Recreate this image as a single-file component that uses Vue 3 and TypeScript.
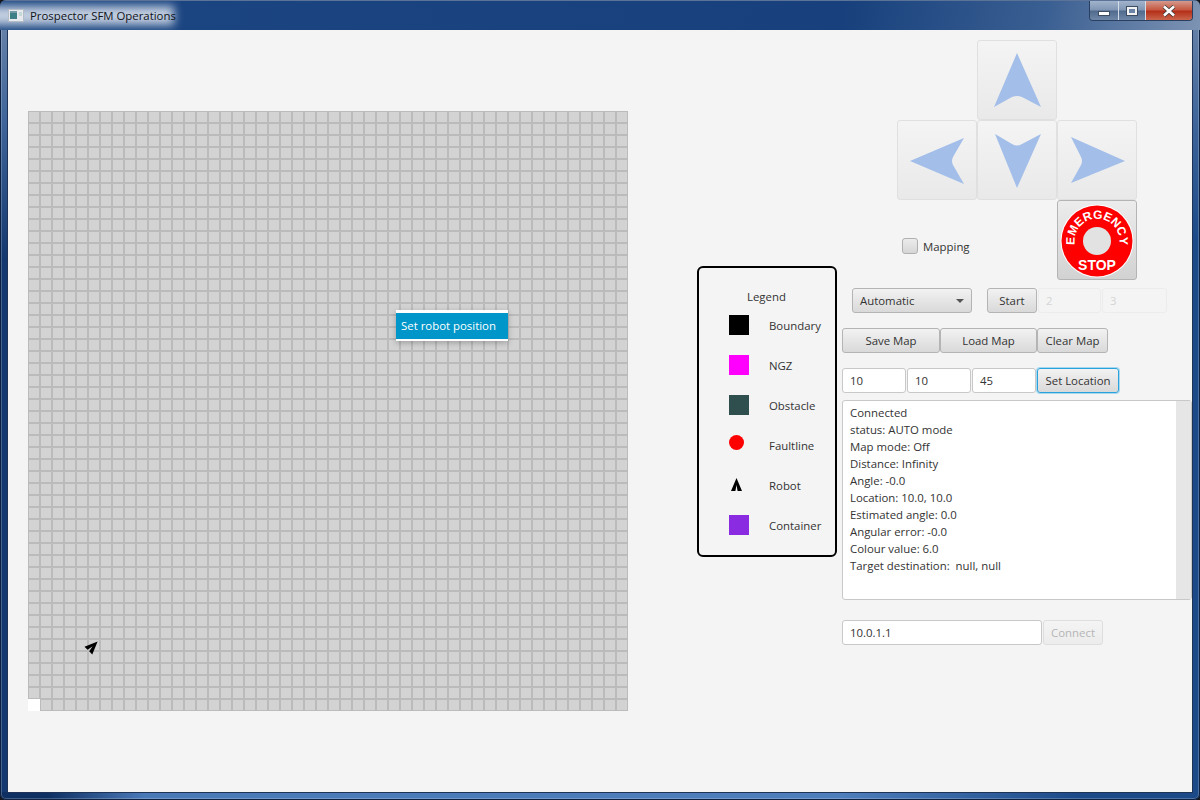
<template>
  <div class="window">
    <div class="titlebar">
      <div class="title-glow">
        <svg class="app-icon" width="16" height="13" viewBox="0 0 16 13">
          <rect x="0.5" y="0.5" width="15" height="12" fill="#e6eaee" stroke="#b4bcc6" />
          <rect x="2" y="3" width="7" height="7" fill="#3c7f86" />
          <rect x="2" y="2" width="7" height="2" fill="#6f9aa6" />
          <rect x="11" y="3" width="3" height="4" fill="#c4d8d8" />
        </svg>
        <span class="title-text">Prospector SFM Operations</span>
      </div>
      <div class="win-controls">
        <div class="win-btn min"><span class="min-glyph"></span></div>
        <div class="win-btn max"><span class="max-glyph"></span></div>
        <div class="win-btn close">
          <svg width="16" height="12" viewBox="0 0 16 12">
            <path d="M3 1.5 L13 10.5 M13 1.5 L3 10.5" stroke="#3a3a3a" stroke-width="4.2" />
            <path d="M3 1.5 L13 10.5 M13 1.5 L3 10.5" stroke="#fff" stroke-width="2.6" />
          </svg>
        </div>
      </div>
    </div>

    <div class="client">
      <div class="map">
        <div class="home-cell"></div>
        <svg class="map-robot" width="18" height="18" viewBox="0 0 18 18">
          <g transform="rotate(45 9 9) translate(3.5 2.5)">
            <path d="M5.5 0 L11 13 L6.6 13 L5.5 7 L4.4 13 L0 13 Z" fill="#000" />
          </g>
        </svg>
        <div class="context-menu">
          <div class="menu-item">Set robot position</div>
        </div>
      </div>

      <div class="legend">
        <div class="legend-title">Legend</div>
        <div v-for="item in legendItems" :key="item.label" class="legend-row">
          <div class="legend-mark">
            <span v-if="item.kind === 'square'" class="swatch" :style="{ background: item.color }"></span>
            <span v-else-if="item.kind === 'circle'" class="dot"></span>
            <svg v-else class="legend-robot" width="11" height="13" viewBox="0 0 11 13">
              <path d="M5.5 0 L11 13 L6.6 13 L5.5 7 L4.4 13 L0 13 Z" fill="#000" />
            </svg>
          </div>
          <span class="legend-label">{{ item.label }}</span>
        </div>
      </div>

      <div class="controls">
        <div class="dpad">
          <button class="pad-btn pad-up">
            <svg width="80" height="80" viewBox="0 0 80 80">
              <path class="arrow" d="M40 13 L64 67 L45 57 Q40 55 35 57 L17 67 Z" />
            </svg>
          </button>
          <button class="pad-btn pad-left">
            <svg width="80" height="80" viewBox="0 0 80 80">
              <path class="arrow" d="M13 41 L67 18 L56 37 Q54 41 56 45 L67 64 Z" />
            </svg>
          </button>
          <button class="pad-btn pad-down">
            <svg width="80" height="80" viewBox="0 0 80 80">
              <path class="arrow" d="M40 68 L18 14 L35 24 Q40 27 45 24 L64 14 Z" />
            </svg>
          </button>
          <button class="pad-btn pad-right">
            <svg width="80" height="80" viewBox="0 0 80 80">
              <path class="arrow" d="M68 41 L14 17 L24 37 Q26 41 24 45 L14 63 Z" />
            </svg>
          </button>
          <label class="mapping">
            <span class="checkbox"></span>
            <span>Mapping</span>
          </label>
          <button class="pad-btn pad-stop">
            <svg width="80" height="80" viewBox="0 0 80 80">
              <defs>
                <path id="stop-arc" d="M18 46 A22.5 22.5 0 1 1 62 46" />
              </defs>
              <circle cx="40" cy="41" r="36.5" fill="#fff" />
              <circle cx="40" cy="41" r="35.5" fill="#fe0000" />
              <circle cx="40" cy="41" r="14" fill="#e2e2e2" />
              <text class="stop-arc-text">
                <textPath href="#stop-arc" startOffset="50%" text-anchor="middle">EMERGENCY</textPath>
              </text>
              <text class="stop-text" x="40" y="69.5" text-anchor="middle">STOP</text>
            </svg>
          </button>
        </div>

        <div class="mode-row">
          <button class="fx-btn mode-select">
            <span>Automatic</span>
            <span class="caret"></span>
          </button>
          <button class="fx-btn start-btn">Start</button>
          <input class="fx-input off-input" disabled placeholder="2" />
          <input class="fx-input off-input" disabled placeholder="3" />
        </div>

        <div class="map-row">
          <button class="fx-btn save-btn">Save Map</button>
          <button class="fx-btn load-btn">Load Map</button>
          <button class="fx-btn clear-btn">Clear Map</button>
        </div>

        <div class="location-row">
          <input class="fx-input loc-input" value="10" />
          <input class="fx-input loc-input" value="10" />
          <input class="fx-input loc-input" value="45" />
          <button class="fx-btn set-btn">Set Location</button>
        </div>

        <div class="status-box">
          <div class="status-text">
            <div v-for="line in statusLines" :key="line">{{ line }}</div>
          </div>
          <div class="status-scroll"></div>
        </div>

        <div class="connect-row">
          <input class="fx-input ip-input" value="10.0.1.1" />
          <button class="fx-btn connect-btn" disabled>Connect</button>
        </div>
      </div>
    </div>
  </div>
</template>

<script setup lang="ts">
interface LegendItem {
  label: string
  kind: 'square' | 'circle' | 'robot'
  color?: string
}

const legendItems: LegendItem[] = [
  { label: 'Boundary', kind: 'square', color: '#000000' },
  { label: 'NGZ', kind: 'square', color: '#ff00ff' },
  { label: 'Obstacle', kind: 'square', color: '#2f4f4f' },
  { label: 'Faultline', kind: 'circle' },
  { label: 'Robot', kind: 'robot' },
  { label: 'Container', kind: 'square', color: '#8a2be2' }
]

const statusLines: string[] = [
  'Connected',
  'status: AUTO mode',
  'Map mode: Off',
  'Distance: Infinity',
  'Angle: -0.0',
  'Location: 10.0, 10.0',
  'Estimated angle: 0.0',
  'Angular error: -0.0',
  'Colour value: 6.0',
  'Target destination:  null, null'
]
</script>

<style>
html,
body {
  margin: 0;
  background: #15181d;
}
</style>

<style scoped>
.window {
  width: 1200px;
  height: 800px;
  box-sizing: border-box;
  display: flex;
  flex-direction: column;
  padding: 0 8px 8px;
  overflow: hidden;
  border-radius: 6px;
  font-family: "Open Sans", "Noto Sans", sans-serif;
  font-size: 11.4px;
  color: #333;
  background:
    linear-gradient(180deg, #6f88ab 0, #3f659a 120px, #12386f 260px, #12386f 100%) 0 0 / 7px 792px no-repeat,
    linear-gradient(180deg, #6f88ab 0, #3f659a 120px, #1c4a88 240px, #1c4a88 100%) 100% 0 / 7px 792px no-repeat,
    linear-gradient(90deg, #0e2f62 0%, #0e2f62 4%, #4a79b8 12%, #4f7ebd 70%, #1c4a88 90%, #1c4a88 100%);
  box-shadow: inset 0 0 0 1px #0d2243, inset 0 0 0 2px rgba(255, 255, 255, 0.22);
}
.titlebar {
  position: relative;
  height: 30px;
  margin: 0 -8px;
  display: flex;
  justify-content: space-between;
  background: linear-gradient(100deg, #1c4682 0%, #17407c 70%, #3a5f92 87%, #7d93b3 100%);
  border-top: 1px solid #5b7396;
  box-sizing: border-box;
  overflow: hidden;
}
.title-glow {
  position: relative;
  display: flex;
  align-items: center;
  gap: 6px;
  height: 29px;
  padding-left: 8px;
}
.title-glow::before {
  content: "";
  position: absolute;
  left: -12px;
  top: 5px;
  width: 186px;
  height: 19px;
  background: #c3cfe0;
  filter: blur(5px);
}
.app-icon,
.title-text {
  position: relative;
}
.title-text {
  color: #10131a;
  white-space: nowrap;
}
.win-controls {
  display: flex;
  height: 19px;
  margin-right: 7px;
  border: 1px solid #2a3f60;
  border-top: 0;
  border-radius: 0 0 4px 4px;
  overflow: hidden;
}
.win-btn {
  display: flex;
  align-items: center;
  justify-content: center;
  background: linear-gradient(180deg, #a2b4cc 0%, #7f95b3 48%, #506a8d 52%, #6f88a8 100%);
  border-right: 1px solid #d4dce8;
}
.min {
  width: 28px;
}
.max {
  width: 26px;
}
.close {
  width: 46px;
  border-right: 0;
  background: linear-gradient(180deg, #d49a8c 0%, #c65a44 45%, #b5301a 55%, #c9664c 100%);
}
.min-glyph {
  width: 10px;
  height: 3px;
  margin-top: 6px;
  background: #fff;
  box-shadow: 0 0 0 1px #3c4c63;
}
.max-glyph {
  width: 6px;
  height: 4px;
  border: 2px solid #f2f2f2;
  background: #6b84a6;
  box-shadow: 0 0 0 1px #3c4c63;
}
.client {
  flex: 1;
  display: flex;
  align-items: flex-start;
  padding-left: 20px;
  background: #f4f4f4;
  box-shadow: 0 0 0 1px #1d3358;
  min-height: 0;
}
.map {
  position: relative;
  flex: none;
  width: 600px;
  height: 600px;
  margin-top: 81px;
  background-color: #d3d3d3;
  background-image:
    linear-gradient(90deg, #bbbbbb 1px, transparent 1px, transparent 11px, #bbbbbb 11px),
    linear-gradient(180deg, #bbbbbb 1px, transparent 1px, transparent 11px, #bbbbbb 11px);
  background-size: 12px 12px;
}
.home-cell {
  position: absolute;
  left: 0;
  bottom: 0;
  width: 12px;
  height: 12px;
  background: #fff;
}
.map-robot {
  position: absolute;
  left: 56px;
  top: 526px;
}
.context-menu {
  position: absolute;
  left: 368px;
  top: 199px;
  width: 112px;
  padding: 3px 0 2px;
  background: #fff;
  box-shadow: 0 2px 6px rgba(0, 0, 0, 0.25);
}
.menu-item {
  height: 26px;
  line-height: 26px;
  padding-left: 5px;
  background: #0096c9;
  color: #fff;
}
.legend {
  flex: none;
  box-sizing: border-box;
  width: 140px;
  height: 291px;
  margin: 236px 0 0 69px;
  padding-left: 30px;
  border: 2px solid #000;
  border-radius: 6px;
}
.legend-title {
  height: 47px;
  padding: 20px 0 0 18px;
  box-sizing: border-box;
  line-height: 17px;
}
.legend-row {
  display: flex;
  height: 40px;
  align-items: flex-start;
}
.legend-mark {
  width: 40px;
  height: 20px;
}
.legend-label {
  line-height: 22px;
}
.swatch {
  display: block;
  width: 20px;
  height: 20px;
}
.dot {
  display: block;
  width: 15px;
  height: 15px;
  border-radius: 50%;
  background: #ff0000;
}
.legend-robot {
  display: block;
  margin: 3px 0 0 2px;
}
.controls {
  flex: none;
  width: 350px;
  margin-left: 5px;
  padding-top: 10px;
}
.dpad {
  display: grid;
  grid-template-columns: repeat(3, 80px);
  grid-template-rows: repeat(3, 80px);
  margin-left: 55px;
}
.pad-btn {
  padding: 0;
  width: 80px;
  height: 80px;
  box-sizing: border-box;
  border: 1px solid #e0e0e0;
  border-radius: 3px;
  background: linear-gradient(180deg, #f4f4f4 0%, #e9e9e9 100%);
  overflow: hidden;
}
.pad-btn svg {
  display: block;
  margin: -1px;
}
.pad-up {
  grid-column: 2;
  grid-row: 1;
}
.pad-left {
  grid-column: 1;
  grid-row: 2;
}
.pad-down {
  grid-column: 2;
  grid-row: 2;
}
.pad-right {
  grid-column: 3;
  grid-row: 2;
}
.pad-stop {
  grid-column: 3;
  grid-row: 3;
  border-color: #b4b4b4;
  background: linear-gradient(180deg, #ececec 0%, #d2d2d2 100%);
}
.arrow {
  fill: #a2bee9;
}
.stop-arc-text {
  font-family: "Liberation Sans", Arial, sans-serif;
  font-weight: 700;
  font-size: 12px;
  fill: #fff;
}
.stop-text {
  font-family: "Liberation Sans", Arial, sans-serif;
  font-weight: 700;
  font-size: 14px;
  fill: #fff;
}
.mapping {
  grid-column: 1;
  grid-row: 3;
  display: flex;
  align-items: center;
  gap: 5px;
  margin: 0 0 0 5px;
  height: 16px;
  padding-top: 38px;
}
.checkbox {
  width: 14px;
  height: 14px;
  border: 1px solid #b0b0b0;
  border-radius: 3px;
  background: linear-gradient(180deg, #ececec, #d6d6d6);
}
.mode-row,
.map-row,
.location-row,
.connect-row {
  display: flex;
  height: 25px;
}
.mode-row {
  margin: 8px 0 0 10px;
}
.map-row {
  margin-top: 15px;
}
.location-row {
  margin-top: 15px;
}
.fx-btn {
  box-sizing: border-box;
  height: 25px;
  padding: 0;
  border: 1px solid #b4b4b4;
  border-radius: 3px;
  background: linear-gradient(180deg, #f2f2f2 0%, #d9d9d9 100%);
  font: inherit;
  color: #333;
}
.fx-input {
  box-sizing: border-box;
  height: 25px;
  padding: 0 7px;
  border: 1px solid #c8c8c8;
  border-radius: 3px;
  background: #fff;
  font: inherit;
  color: #333;
  outline: none;
  min-width: 0;
}
.mode-select {
  width: 120px;
  display: flex;
  align-items: center;
  justify-content: space-between;
  padding: 0 7px;
}
.caret {
  width: 0;
  height: 0;
  border-left: 4px solid transparent;
  border-right: 4px solid transparent;
  border-top: 4px solid #555;
}
.start-btn {
  width: 50px;
  margin: 0 1px 0 15px;
}
.off-input {
  width: 63px;
  background: #f4f4f4;
  border-color: #ececec;
}
.off-input + .off-input {
  margin-left: 1px;
  width: 65px;
}
.off-input::placeholder {
  color: #d4d4d4;
  opacity: 1;
}
.save-btn {
  width: 98px;
}
.load-btn {
  width: 97px;
}
.clear-btn {
  width: 71px;
}
.loc-input {
  width: 64px;
  margin-right: 1px;
}
.set-btn {
  width: 82px;
  border-color: #2aa3dc;
  box-shadow: 0 0 0 1px #a9d8ee;
}
.status-box {
  box-sizing: border-box;
  display: flex;
  width: 350px;
  height: 200px;
  margin-top: 7px;
  border: 1px solid #c8c8c8;
  border-radius: 3px;
  background: #fff;
}
.status-text {
  flex: 1;
  padding: 3px 7px;
  line-height: 17px;
  white-space: pre;
}
.status-scroll {
  width: 15px;
  background: #e6e6e6;
}
.connect-row {
  margin-top: 20px;
}
.ip-input {
  width: 200px;
  margin-right: 1px;
}
.connect-btn {
  width: 60px;
  color: #b5b5b5;
  border-color: #dedede;
  background: linear-gradient(180deg, #f4f4f4, #ececec);
}
</style>
